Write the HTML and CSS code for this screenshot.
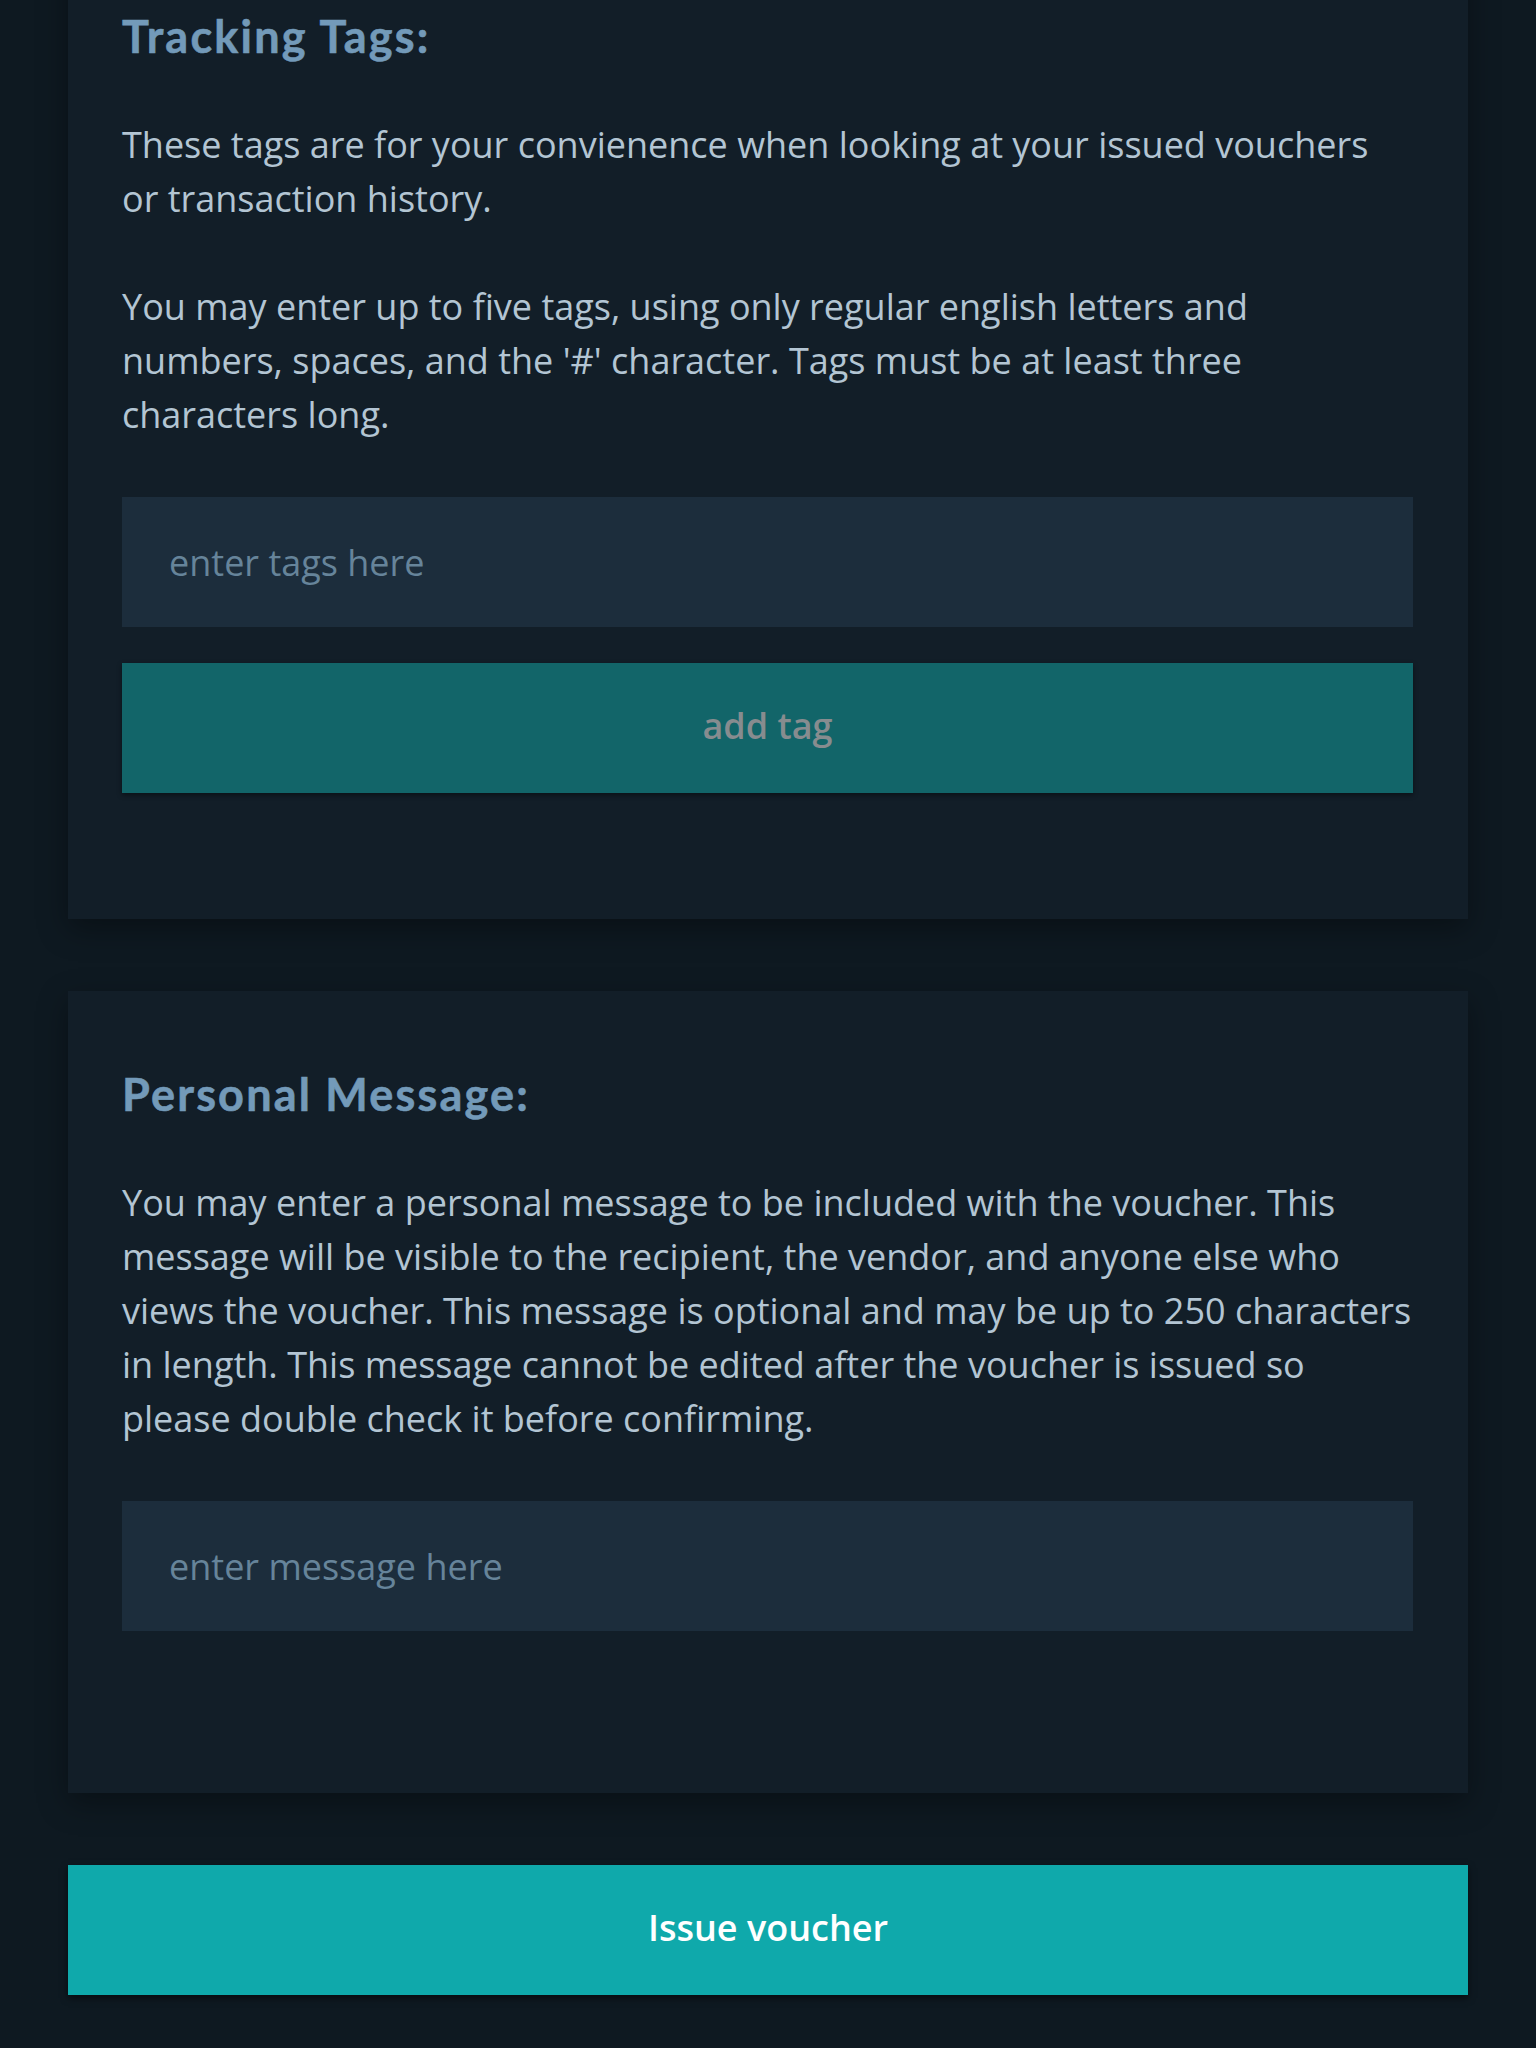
FILE: index.html
```html
<!DOCTYPE html>
<html lang="en">
<head>
<meta charset="utf-8">
<title>Issue voucher</title>
<link rel="stylesheet" href="styles.css">
</head>
<body>
<main class="page">
  <section class="card card-first">
    <h2 class="card-title">Tracking Tags:</h2>
    <p class="card-text">These tags are for your convienence when looking at your issued vouchers or transaction history.</p>
    <p class="card-text">You may enter up to five tags, using only regular english letters and numbers, spaces, and the '#' character. Tags must be at least three characters long.</p>
    <input class="field" type="text" placeholder="enter tags here">
    <button class="btn btn-muted" type="button">add tag</button>
  </section>
  <section class="card">
    <h2 class="card-title">Personal Message:</h2>
    <p class="card-text">You may enter a personal message to be included with the voucher. This message will be visible to the recipient, the vendor, and anyone else who views the voucher. This message is optional and may be up to 250 characters in length. This message cannot be edited after the voucher is issued so please double check it before confirming.</p>
    <input class="field field-last" type="text" placeholder="enter message here">
  </section>
  <button class="btn btn-primary" type="button">Issue voucher</button>
</main>
</body>
</html>
```
FILE: styles.css
```css
html, body {
  margin: 0;
  padding: 0;
  background: #0e1921;
}
body {
  font-family: "Open Sans", "Noto Sans", sans-serif;
  overflow: hidden;
}
.page {
  display: flex;
  flex-direction: column;
  gap: 72px;
  padding: 0 68px 54px;
}
.card {
  background: #121e28;
  padding: 77px 55px 126px 54px;
  box-shadow: 0 10px 28px rgba(0, 0, 0, 0.35);
  display: flex;
  flex-direction: column;
}
.card-first {
  margin-top: -67px;
}
.card-title {
  margin: 0 0 56px;
  font-family: "Lato", "Open Sans", sans-serif;
  font-weight: 700;
  font-size: 45px;
  letter-spacing: 2.2px;
  line-height: 52px;
  color: #739ab9;
  -webkit-text-stroke: 0.6px #739ab9;
}
.card-text {
  margin: 0 1px 54px 0;
  font-size: 36px;
  line-height: 54px;
  color: #b3c5d3;
}
.card-text:last-of-type {
  margin-bottom: 55px;
}
.field {
  display: block;
  box-sizing: border-box;
  width: 100%;
  height: 130px;
  margin: 0;
  padding: 0 47px;
  border: 0;
  outline: none;
  background: #1c2d3c;
  font-family: "Open Sans", sans-serif;
  font-size: 36px;
  color: #b3c5d3;
}
.field::placeholder {
  color: #66849a;
  opacity: 1;
}
.field-last {
  margin-bottom: 36px;
}
.btn {
  display: block;
  box-sizing: border-box;
  width: 100%;
  height: 130px;
  border: 0;
  padding: 0 0 5px;
  font-family: "Open Sans", sans-serif;
  font-weight: 600;
  font-size: 36px;
  cursor: pointer;
}
.btn-muted {
  margin-top: 36px;
  background: #126569;
  color: #878c8f;
  box-shadow: 0 2px 5px rgba(0, 0, 0, 0.45);
}
.btn-primary {
  background: #0fa9ab;
  color: #ffffff;
  box-shadow: 0 3px 7px rgba(0, 0, 0, 0.55);
}
```
